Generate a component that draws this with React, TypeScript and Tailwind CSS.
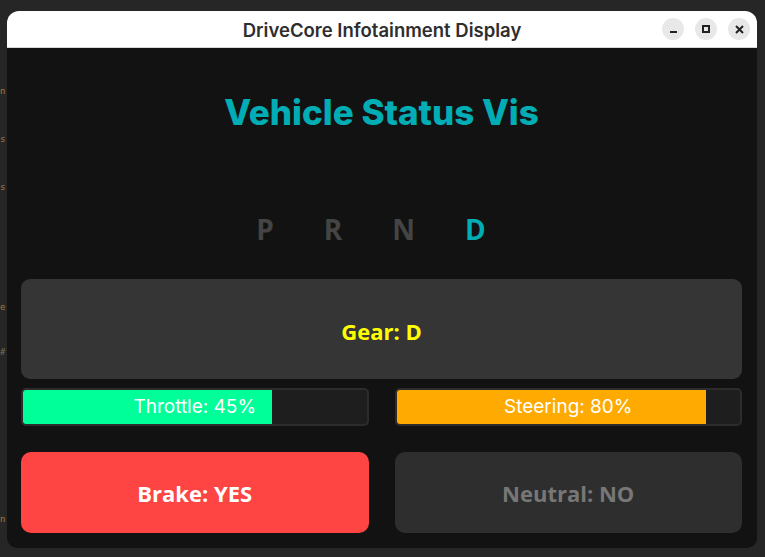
import React from 'react'

const gears = ['P', 'R', 'N', 'D']

function Bar({ label, pct, fill }: { label: string; pct: number; fill: string }) {
  return (
    <div className="relative h-[38px] rounded-[5px] border-2 border-[#2c2c2c] bg-[#1e1e1e] overflow-hidden">
      <div className={`h-full ${fill}`} style={{ width: `${pct}%` }} />
      <div className="absolute inset-0 flex items-center justify-center text-[19px] text-white font-['Inter',sans-serif]">
        {label}
      </div>
    </div>
  )
}

export default function App() {
  const active = 'D'

  return (
    <div className="w-[765px] h-[557px] bg-[#262626] flex pt-[11px] overflow-hidden">
      {/* desktop behind the window */}
      <div className="w-[7px] flex flex-col text-[9px] leading-[10px] text-[#a07a3c] font-['DejaVu_Sans_Mono',monospace]">
        <span className="mt-[75px]">n</span>
        <span className="mt-[38px]">s</span>
        <span className="mt-[38px]">s</span>
        <span className="mt-[110px]">e</span>
        <span className="mt-[35px] text-[#707050]">#</span>
        <span className="mt-[157px]">n</span>
      </div>

      <div className="w-[750px] h-[537px] flex flex-col rounded-t-[12px] rounded-b-[10px] overflow-hidden">
        {/* title bar */}
        <div className="h-[37px] bg-white border-b border-[#d8d8d8] flex items-center relative">
          <div className="flex-1 text-center pt-[3px] text-[18.5px] font-semibold text-[#2e2e2e] font-['Inter',sans-serif]">
            DriveCore Infotainment Display
          </div>
          <div className="absolute right-[7px] top-[7px] flex gap-[11px]">
            <div className="w-[22px] h-[22px] rounded-full bg-[#e8e8e8] flex items-end justify-center pb-[7px]">
              <div className="w-[7px] h-[2px] bg-[#222]" />
            </div>
            <div className="w-[22px] h-[22px] rounded-full bg-[#e8e8e8] flex items-center justify-center">
              <div className="w-[8px] h-[8px] border-2 border-[#222]" />
            </div>
            <div className="w-[22px] h-[22px] rounded-full bg-[#e8e8e8] flex items-center justify-center">
              <svg width="9" height="9" viewBox="0 0 9 9">
                <path d="M1 1L8 8M8 1L1 8" stroke="#222" strokeWidth="2" />
              </svg>
            </div>
          </div>
        </div>

        {/* content */}
        <div className="flex-1 bg-[#121212] px-[14px] pr-[15px] pt-[44px]">
          <h1 className="h-[40px] leading-[40px] text-center text-[35px] font-extrabold text-[#00adb5] font-['Inter',sans-serif]">
            Vehicle Status Vis
          </h1>

          <div className="mt-[81px] h-[32px] flex justify-center gap-[50px] pr-[21px] text-[28px] leading-[32px] font-bold font-['Open_Sans',sans-serif]">
            {gears.map((g) => (
              <span key={g} className={g === active ? 'text-[#00adb5]' : 'text-[#444444]'}>
                {g}
              </span>
            ))}
          </div>

          <div className="mt-[34px] h-[100px] rounded-[9px] bg-[#353535] flex items-center justify-center pt-[4px] text-[22px] font-bold text-[#ffff00] font-['Open_Sans',sans-serif]">
            Gear: {active}
          </div>

          <div className="mt-[9px] grid grid-cols-2 gap-[26px]">
            <Bar label="Throttle: 45%" pct={72.6} fill="bg-[#00ff99]" />
            <Bar label="Steering: 80%" pct={90} fill="bg-[#ffaa00]" />
          </div>

          <div className="mt-[26px] grid grid-cols-2 gap-[26px]">
            <div className="h-[81px] rounded-[10px] bg-[#ff4444] flex items-center justify-center pt-[2px] text-[22px] font-bold text-white font-['Open_Sans',sans-serif]">
              Brake: YES
            </div>
            <div className="h-[81px] rounded-[10px] bg-[#2e2e2e] flex items-center justify-center pt-[2px] text-[22px] font-bold text-[#777777] font-['Open_Sans',sans-serif]">
              Neutral: NO
            </div>
          </div>
        </div>
      </div>
    </div>
  )
}
